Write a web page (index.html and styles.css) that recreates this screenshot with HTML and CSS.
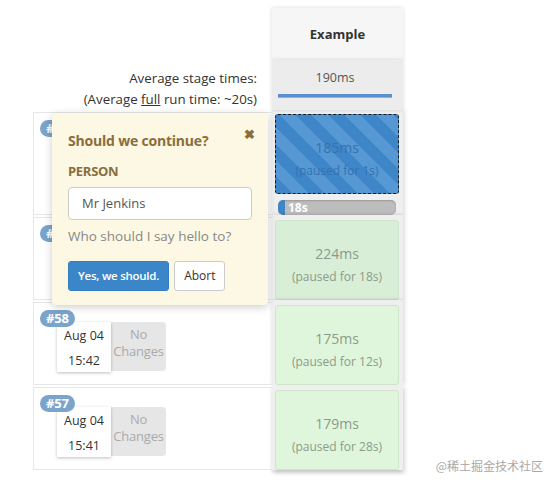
FILE: index.html
```html
<!DOCTYPE html>
<html>
<head>
<meta charset="utf-8">
<link rel="stylesheet" href="styles.css">
</head>
<body>
<div class="view">
  <div class="grid">
    <div class="head-left"></div>
    <div class="stage-head">Example</div>

    <div class="avg-left">
      <div>Average stage times:</div>
      <div>(Average <u>full</u> run time: ~20s)</div>
    </div>
    <div class="stage-avg">
      <div class="avg-time">190ms</div>
      <div class="avg-bar"></div>
    </div>

    <div class="build first">
      <span class="badge">#60</span>
    </div>
    <div class="stage-cell first">
      <div class="cell paused">
        <div class="ms">185ms</div>
        <div class="sub">(paused for 1s)</div>
      </div>
      <div class="progress"><span class="fill"></span><span class="ptext">18s</span></div>
    </div>

    <div class="build">
      <span class="badge">#59</span>
    </div>
    <div class="stage-cell">
      <div class="cell ok shade">
        <div class="ms">224ms</div>
        <div class="sub">(paused for 18s)</div>
      </div>
    </div>

    <div class="build">
      <span class="badge">#58</span>
      <div class="build-info">
        <div class="date"><div>Aug 04</div><div>15:42</div></div>
        <div class="changes">No<br>Changes</div>
      </div>
    </div>
    <div class="stage-cell">
      <div class="cell ok">
        <div class="ms">175ms</div>
        <div class="sub">(paused for 12s)</div>
      </div>
    </div>

    <div class="build">
      <span class="badge">#57</span>
      <div class="build-info">
        <div class="date"><div>Aug 04</div><div>15:41</div></div>
        <div class="changes">No<br>Changes</div>
      </div>
    </div>
    <div class="stage-cell last">
      <div class="cell ok">
        <div class="ms">179ms</div>
        <div class="sub">(paused for 28s)</div>
      </div>
    </div>
  </div>

  <div class="popover">
    <div class="pop-title">Should we continue?</div>
    <span class="pop-close">&#10006;</span>
    <div class="pop-label">PERSON</div>
    <div class="pop-input">Mr Jenkins</div>
    <div class="pop-help">Who should I say hello to?</div>
    <div class="pop-buttons">
      <span class="btn primary">Yes, we should.</span>
      <span class="btn">Abort</span>
    </div>
  </div>

  <div class="watermark">@稀土掘金技术社区</div>
</div>
</body>
</html>
```

FILE: styles.css
```css
* { box-sizing: border-box; }
html, body { margin: 0; padding: 0; background: #fff; }
body {
  font-family: "Open Sans", "Noto Sans", "Noto Sans CJK SC", sans-serif;
  font-size: 12px;
  color: #333;
}
.view {
  position: relative;
  width: 557px;
  height: 487px;
  padding-top: 8px;
}
.grid {
  display: grid;
  grid-template-columns: 272px 131px;
  grid-template-rows: 52px 50px 105px 85px 85px 85px;
}
.stage-head {
  background: #f6f6f6;
  font-weight: 700;
  font-size: 13px;
  display: flex;
  align-items: center;
  justify-content: center;
  box-shadow: 0 0 4px rgba(0,0,0,.15);
  position: relative;
  z-index: 1;
}
.avg-left {
  text-align: right;
  padding-right: 15px;
  padding-top: 8px;
  line-height: 21px;
  font-size: 13.3px;
  color: #333;
}
.stage-avg {
  background: #ececec;
  padding: 9px 11px 0 6px;
  box-shadow: 0 0 4px rgba(0,0,0,.15);
  position: relative;
  z-index: 1;
}
.avg-time {
  text-align: center;
  color: #555;
  font-size: 12.5px;
  line-height: 18px;
}
.avg-bar {
  margin-top: 7px;
  height: 4px;
  background: #5b8fd2;
  border-bottom: 1px solid #8fb3e0;
}
.build {
  margin-left: 33px;
  margin-top: 2px;
  border: 1px solid #e6e6e6;
  border-right: none;
  position: relative;
  padding: 19px 0 0 23px;
}
.badge {
  position: absolute;
  left: 6px;
  top: 7px;
  z-index: 2;
  background: #7ba4cc;
  color: #fff;
  font-weight: 700;
  font-size: 13px;
  line-height: 17px;
  height: 17px;
  padding: 0 6px;
  border-radius: 9px;
  letter-spacing: -0.2px;
}
.build-info {
  display: flex;
}
.date {
  width: 54px;
  height: 50px;
  background: #fff;
  box-shadow: 0 1px 3px rgba(0,0,0,.25);
  text-align: center;
  font-size: 12.5px;
  line-height: 25px;
  padding-top: 1px;
  position: relative;
  z-index: 1;
}
.changes {
  width: 55px;
  height: 49px;
  background: #e6e6e6;
  border-radius: 0 4px 4px 0;
  color: #aaa;
  text-align: center;
  font-size: 13px;
  line-height: 17px;
  padding-top: 4px;
  letter-spacing: -0.2px;
}
.stage-cell {
  background: #efefef;
  padding: 5px 4px 0 3px;
  box-shadow: 2px 0 4px rgba(0,0,0,.12), -1px 0 3px rgba(0,0,0,.08);
}
.stage-cell.first { padding-top: 4px; }
.stage-cell.last { box-shadow: 2px 3px 4px rgba(0,0,0,.15), -1px 3px 3px rgba(0,0,0,.08); }
.cell {
  height: 80px;
  border-radius: 3px;
  display: flex;
  flex-direction: column;
  align-items: center;
  justify-content: center;
  text-align: center;
  padding-top: 10px;
}
.cell .ms { font-size: 14px; line-height: 22px; }
.cell .sub { font-size: 12px; line-height: 20px; margin-top: 2px; }
.paused {
  background: repeating-linear-gradient(45deg, #3f86c8 0 11.5px, #5598d4 11.5px 23px);
  border: 1px dashed #1a1a1a;
  color: #3272b2;
}
.ok {
  background: #e0f6dc;
  border: 1px solid #cfe6cb;
  color: #8a9b8a;
}
.ok.shade { background: #d9eed6; }
.progress {
  margin: 6px 3px 0 3px;
  height: 15px;
  border-radius: 5px;
  background: #bdbdbd;
  box-shadow: inset 0 1px 2px rgba(0,0,0,.2);
  display: flex;
  align-items: center;
  overflow: hidden;
}
.progress .fill {
  width: 7px;
  height: 15px;
  background: #3d86c8;
  border-radius: 5px 0 0 5px;
}
.progress .ptext {
  color: #fff;
  font-weight: 700;
  font-size: 12px;
  margin-left: 3px;
  line-height: 15px;
}
.popover {
  position: absolute;
  left: 52px;
  top: 113px;
  width: 216px;
  height: 192px;
  background: #fcf8e3;
  border-radius: 4px;
  box-shadow: 0 2px 8px rgba(0,0,0,.2);
  padding: 18px 16px 0 16px;
  z-index: 5;
}
.pop-title {
  color: #8a6d3b;
  font-weight: 700;
  font-size: 14px;
  line-height: 20px;
  letter-spacing: -0.2px;
}
.pop-close {
  position: absolute;
  right: 13px;
  top: 12px;
  color: #8a6d3b;
  font-size: 13px;
  font-weight: 700;
}
.pop-label {
  margin-top: 10px;
  color: #8a6d3b;
  font-weight: 700;
  font-size: 13px;
  line-height: 20px;
  letter-spacing: -0.3px;
}
.pop-input {
  margin-top: 6px;
  height: 33px;
  width: 184px;
  background: #fff;
  border: 1px solid #ccc;
  border-radius: 4px;
  padding: 0 13px;
  line-height: 31px;
  font-size: 13px;
  color: #555;
}
.pop-help {
  margin-top: 6px;
  color: #888;
  font-size: 13.5px;
  line-height: 20px;
}
.pop-buttons {
  margin-top: 15px;
  display: flex;
  gap: 5px;
}
.btn {
  height: 30px;
  line-height: 28px;
  border: 1px solid #ccc;
  border-radius: 3px;
  background: #fff;
  padding: 0 9px;
  font-size: 12px;
  color: #333;
}
.btn.primary {
  background: #3a86c8;
  border-color: #3580c0;
  color: #fff;
  font-weight: 600;
  font-size: 11.5px;
  letter-spacing: -0.25px;
  padding: 0 9px;
}
.watermark {
  position: absolute;
  right: 14px;
  top: 457px;
  color: #a8a8a8;
  font-size: 12px;
  font-family: "Noto Sans CJK SC", sans-serif;
}
```
